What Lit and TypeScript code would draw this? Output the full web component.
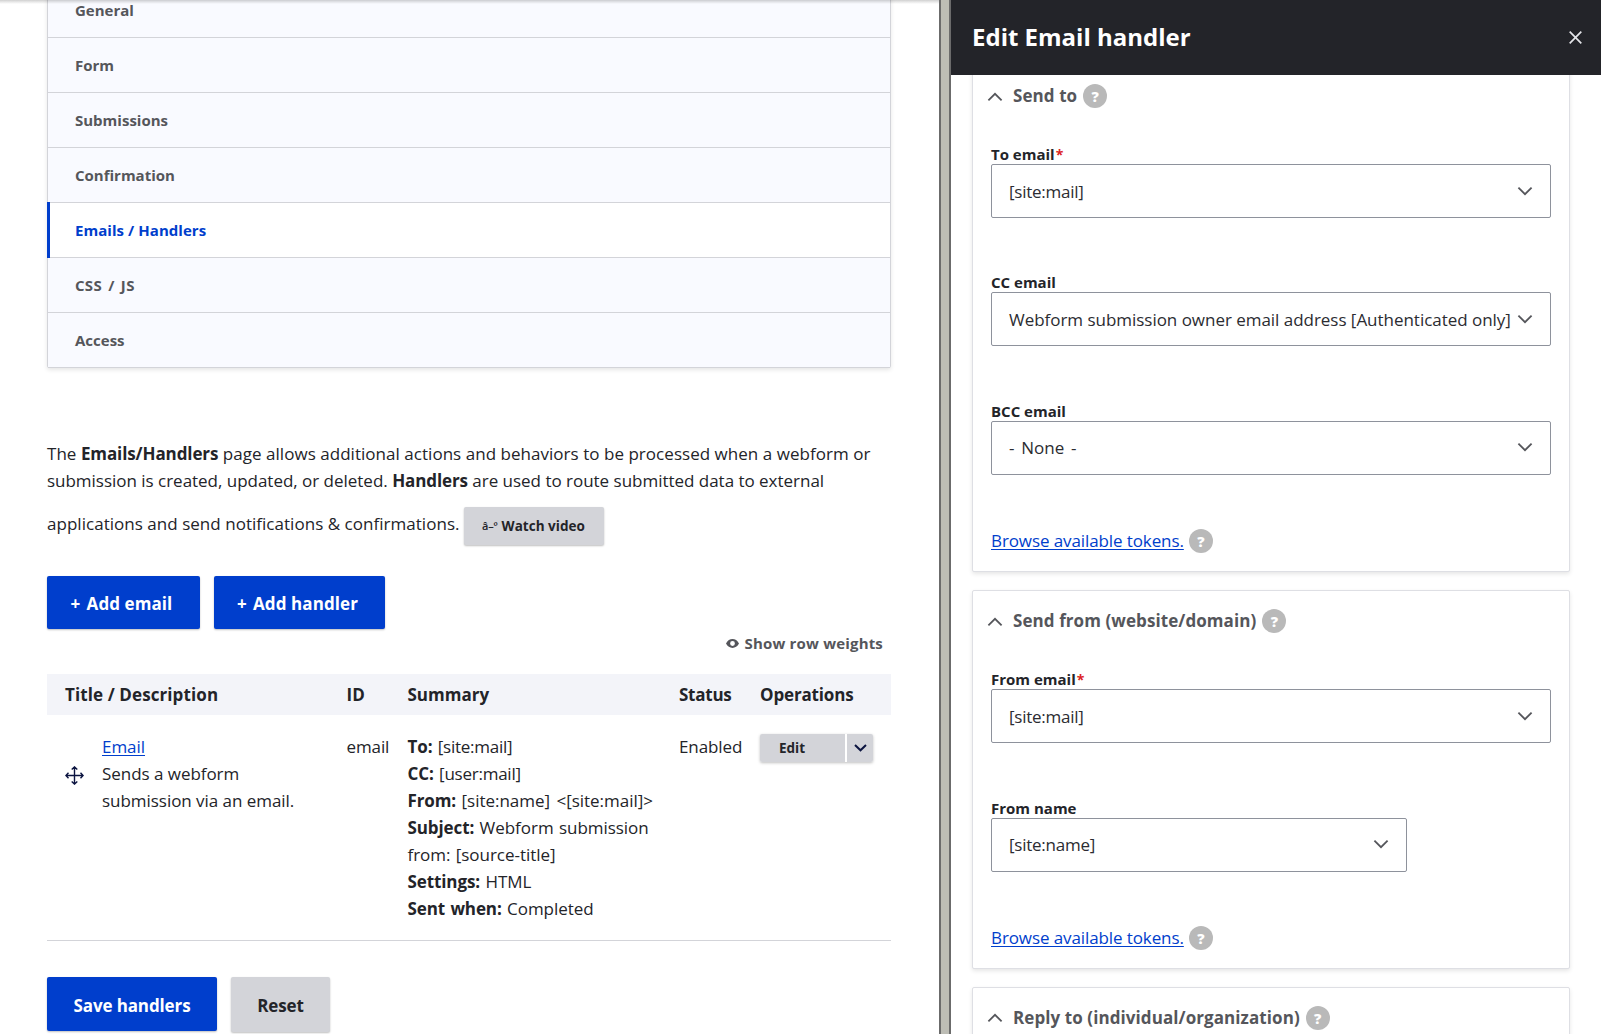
import { LitElement, html, css, nothing } from "lit";
import { customElement, property } from "lit/decorators.js";
import { classMap } from "lit/directives/class-map.js";

const chevron = (up: boolean, cls: string) => html`<svg class=${cls} width="16" height="10" viewBox="0 0 16 10" fill="none">
  <path d=${up ? "M1.4 8.4L8 1.8L14.6 8.4" : "M1.4 1.6L8 8.2L14.6 1.6"} stroke="currentColor" stroke-width="1.8" />
</svg>`;

const help = html`<span class="help">?</span>`;

const shared = css`
  * { box-sizing: border-box; }
  b { letter-spacing: -0.1px; }
  .link { color: #003ecc; text-decoration: underline; text-decoration-thickness: 1px; text-underline-offset: 2px; }
  .help {
    flex: none; width: 24px; height: 24px; border-radius: 50%; background: #b9b9b9; color: #fff;
    font-size: 14.5px; line-height: 25px; font-weight: 800; text-align: center; letter-spacing: 0;
  }
`;

interface Field { label: string; value: string; required?: boolean; narrow?: boolean }

@customElement("email-fieldset")
class EmailFieldset extends LitElement {
  @property() heading = "";
  @property({ attribute: false }) fields: Field[] = [];

  static styles = [shared, css`
    :host {
      display: block; flex: none; width: 598px; border: 1px solid #dedfe4; border-radius: 2px;
      background: #fff; box-shadow: 0 2px 4px rgba(0, 0, 0, 0.1);
    }
    .summary { display: flex; align-items: center; height: 61px; padding-left: 14px; color: #55565b; font-weight: 700; }
    .summary .text { margin-left: 10px; margin-right: 6px; line-height: 24px; padding-bottom: 1px; letter-spacing: 0.08px; white-space: nowrap; }
    .summary .help { margin-top: -1px; }
    .body { padding: 17px 18px 18px; }
    .field { margin-bottom: 54.4px; }
    .label { display: block; font-size: 15px; line-height: 20px; font-weight: 700; white-space: nowrap; }
    .req { color: #dc2323; margin-left: 1px; font-size: 14px; line-height: 1; }
    .select {
      display: flex; align-items: center; justify-content: space-between; height: 54px;
      border: 1px solid #8e929c; border-radius: 2px; padding: 0 17px; white-space: nowrap; color: #2b2c31;
    }
    .select.narrow { width: 416px; }
    .value { letter-spacing: -0.03px; }
    .value.token { letter-spacing: -0.25px; }
    .value.none { word-spacing: 2.5px; }
    .down { color: #55565b; margin-top: -1px; flex: none; }
    .tokens { display: flex; align-items: center; gap: 5px; height: 24px; letter-spacing: -0.1px; }
    .tokens .link { line-height: 24px; white-space: nowrap; }
  `];

  render() {
    return html`
      <div class="summary">${chevron(true, "up")}<span class="text">${this.heading}</span>${help}</div>
      ${this.fields.length ? html`<div class="body">
        ${this.fields.map(f => html`<div class="field">
          <label class="label">${f.label}${f.required ? html`<span class="req">*</span>` : nothing}</label>
          <div class=${classMap({ select: true, narrow: !!f.narrow })}>
            <span class=${classMap({ value: true, token: f.value.startsWith("["), none: f.value.startsWith("-") })}>${f.value}</span>${chevron(false, "down")}
          </div>
        </div>`)}
        <div class="tokens"><a class="link">Browse available tokens.</a>${help}</div>
      </div>` : nothing}
    `;
  }
}

@customElement("app-root")
class AppRoot extends LitElement {
  static styles = [shared, css`
    :host {
      display: flex; width: 1601px; height: 1034px; overflow: hidden; background: #fff; color: #232429;
      font-family: "Open Sans", "Noto Sans", sans-serif; font-size: 17px; line-height: 27px;
    }
    .main {
      position: relative; width: 939px; height: 1034px; overflow: hidden; padding: 0 48px 0 47px;
      display: flex; flex-direction: column;
    }
    .topshade { position: absolute; left: 0; right: 0; top: 0; height: 4px; background: linear-gradient(rgba(0,0,0,.19), rgba(0,0,0,.12) 30%, rgba(0,0,0,0)); }
    .tabs { flex: none; margin-top: -17px; border: 1px solid #d3d4d9; border-width: 0 1px; border-radius: 2px; box-shadow: 0 2px 4px rgba(0,0,0,.1); }
    .tab {
      height: 55px; padding-left: 27px; border-bottom: 1px solid #d3d4d9; background: #f9faff; color: #55565b;
      font-size: 15px; font-weight: 700; line-height: 54px;
    }
    .tab.active { background: #fff; color: #003ecc; position: relative; letter-spacing: 0.05px; }
    .tab.active::before { content: ""; position: absolute; left: -1px; top: -1px; width: 3px; height: 56px; background: #003ecc; }
    .tab.wide { letter-spacing: 0.3px; word-spacing: 2px; }
    .intro { margin-top: 72px; white-space: nowrap; }
    .intro-first { letter-spacing: 0.035px; }
    .intro-second { letter-spacing: -0.02px; }
    .intro-last { display: flex; align-items: flex-start; gap: 4px; margin-top: 13px; height: 38px; line-height: 33px; }
    .intro-last .copy { letter-spacing: 0.03px; }
    .btn {
      display: flex; align-items: center; justify-content: center; border-radius: 2px; font-weight: 700; white-space: nowrap;
      background: #d3d4d9; color: #232429; box-shadow: 0 1px 2px rgba(0,0,0,.25); letter-spacing: -0.12px;
    }
    .btn.primary { background: #003ecc; color: #fff; }
    .btn.watch { width: 140px; height: 38px; font-size: 13.5px; gap: 4px; letter-spacing: 0.03px; line-height: 20px; padding-bottom: 1px; }
    .mojibake { font-size: 11px; line-height: 14px; font-weight: 600; letter-spacing: -0.2px; }
    .actions { display: flex; gap: 14px; margin-top: 31px; height: 53px; }
    .plus { width: 16px; flex: none; }
    .add-email { width: 153px; } .add-handler { width: 171px; }
    .btn.add-email, .btn.add-handler { padding: 2px 4px 0 0; letter-spacing: 0.08px; }
    .weights { display: flex; align-items: center; justify-content: flex-end; gap: 6px; height: 45px; padding: 0 8px 17px 0; font-size: 15px; font-weight: 700; letter-spacing: 0.18px; color: #55565b; }
    .row { display: grid; grid-template-columns: 281.5px 61px 271.5px 81px 131px; padding-left: 18px; }
    .head { height: 41px; background: #f3f4f9; font-weight: 700; line-height: 42px; }
    .head .name { letter-spacing: 0.1px; }
    .head .status { letter-spacing: -0.25px; }
    .head .ops { letter-spacing: -0.15px; }
    .data { height: 226px; padding-top: 18px; border-bottom: 1px solid #d3d4d9; letter-spacing: -0.1px; white-space: nowrap; }
    .title { display: flex; gap: 18px; letter-spacing: -0.04px; }
    .drag { margin-top: 33px; flex: none; }
    .details { letter-spacing: -0.04px; word-spacing: 1px; }
    .token { letter-spacing: -0.25px; }
    .token.sender { letter-spacing: -0.02px; word-spacing: 2px; }
    .drop { display: flex; gap: 2px; width: 113px; height: 28px; margin-top: 1px; border-radius: 2px; box-shadow: 0 1px 3px rgba(0,0,0,.25); background: #fff; }
    .edit { width: 85px; padding-left: 19px; background: #d3d4d9; border-radius: 2px 0 0 2px; font-size: 13.5px; font-weight: 700; line-height: 28px; letter-spacing: 0; }
    .more { width: 26px; display: flex; align-items: center; justify-content: center; background: #d3d4d9; border-radius: 0 2px 2px 0; }
    .footer { display: flex; gap: 14px; margin-top: 36px; height: 54px; }
    .save { width: 170px; } .reset { width: 99px; height: 55px; }
    .save, .reset { padding-top: 2px; }
    .splitter { flex: none; width: 12px; background: #bdbdb5; border: 2px solid #6b6b6b; border-width: 0 2px; }
    .dialog { width: 650px; height: 1034px; display: flex; flex-direction: column; overflow: hidden; }
    .titlebar {
      flex: none; height: 75px; padding: 0 19.5px 0 21px; display: flex; align-items: center; justify-content: space-between;
      background: #232429; color: #fff; position: relative; z-index: 1;
    }
    .heading { font-size: 24px; font-weight: 700; line-height: 30px; padding-bottom: 2px; }
    .scroll { display: flex; flex-direction: column; gap: 18px; margin-top: -10px; padding-left: 21px; }
  `];

  tabs = ["General", "Form", "Submissions", "Confirmation", "Emails / Handlers", "CSS / JS", "Access"];

  render() {
    return html`
      <div class="main">
        <nav class="tabs">
          ${this.tabs.map((t, i) => html`<div class=${classMap({ tab: true, active: i === 4, wide: i === 5 })}>${t}</div>`)}
        </nav>
        <div class="intro">
          <div class="intro-first">The <b>Emails/Handlers</b> page allows additional actions and behaviors to be processed when a webform or</div>
          <div class="intro-second">submission is created, updated, or deleted. <b>Handlers</b> are used to route submitted data to external</div>
          <div class="intro-last">
            <span class="copy">applications and send notifications &amp; confirmations.</span>
            <span class="btn watch"><span class="mojibake">â–º</span>Watch video</span>
          </div>
        </div>
        <div class="actions">
          <span class="btn primary add-email"><span class="plus">+</span>Add email</span>
          <span class="btn primary add-handler"><span class="plus">+</span>Add handler</span>
        </div>
        <div class="weights">
          <svg width="13" height="9" viewBox="0 0 13 9"><path fill="currentColor" fill-rule="evenodd" d="M0 4.500C1.600 1.600 3.900.1 6.500.1S11.400 1.600 13 4.500C11.400 7.400 9.100 8.900 6.500 8.900S1.600 7.400 0 4.500ZM6.500 2.100a2.400 2.400 0 1 0 0 4.800a2.400 2.400 0 1 0 0-4.800Z" /></svg>
          <span>Show row weights</span>
        </div>
        <div class="row head">
          <span class="name">Title / Description</span><span>ID</span><span>Summary</span><span class="status">Status</span><span class="ops">Operations</span>
        </div>
        <div class="row data">
          <div class="title">
            <svg class="drag" width="19" height="19" viewBox="0 0 19 19" fill="none" stroke="#0b1440" stroke-width="1.400">
              <path d="M9.500 1V18M1 9.500H18M6.700 3.500L9.500.9L12.300 3.500M6.700 15.500L9.500 18.100L12.300 15.500M3.500 6.700L.9 9.500L3.500 12.300M15.500 6.700L18.100 9.500L15.500 12.300" />
            </svg>
            <div><a class="link">Email</a><br>Sends a webform<br>submission via an email.</div>
          </div>
          <span>email</span>
          <div class="details">
            <b>To:</b> <span class="token">[site:mail]</span><br>
            <b>CC:</b> <span class="token">[user:mail]</span><br>
            <b>From:</b> <span class="token sender">[site:name] &lt;[site:mail]&gt;</span><br>
            <b>Subject:</b> Webform submission<br>
            from: [source-title]<br>
            <b>Settings:</b> HTML<br>
            <b>Sent when:</b> Completed
          </div>
          <span>Enabled</span>
          <div class="drop">
            <span class="edit">Edit</span>
            <span class="more"><svg width="13" height="8" viewBox="0 0 13 8" fill="none"><path d="M1 1L6.500 6.300L12 1" stroke="#0b1440" stroke-width="2" /></svg></span>
          </div>
        </div>
        <div class="footer"><span class="btn primary save">Save handlers</span><span class="btn reset">Reset</span></div>
        <div class="topshade"></div>
      </div>
      <div class="splitter"></div>
      <div class="dialog">
        <div class="titlebar">
          <span class="heading">Edit Email handler</span>
          <svg width="13" height="13" viewBox="0 0 13 13" stroke="#e4e5e9" stroke-width="1.700"><path d="M.7.7L12.300 12.300M12.300.7L.7 12.300" /></svg>
        </div>
        <div class="scroll">
          <email-fieldset heading="Send to" .fields=${[
            { label: "To email", value: "[site:mail]", required: true },
            { label: "CC email", value: "Webform submission owner email address [Authenticated only]" },
            { label: "BCC email", value: "- None -" },
          ]}></email-fieldset>
          <email-fieldset heading="Send from (website/domain)" .fields=${[
            { label: "From email", value: "[site:mail]", required: true },
            { label: "From name", value: "[site:name]", narrow: true },
          ]}></email-fieldset>
          <email-fieldset heading="Reply to (individual/organization)"></email-fieldset>
        </div>
      </div>
    `;
  }
}
